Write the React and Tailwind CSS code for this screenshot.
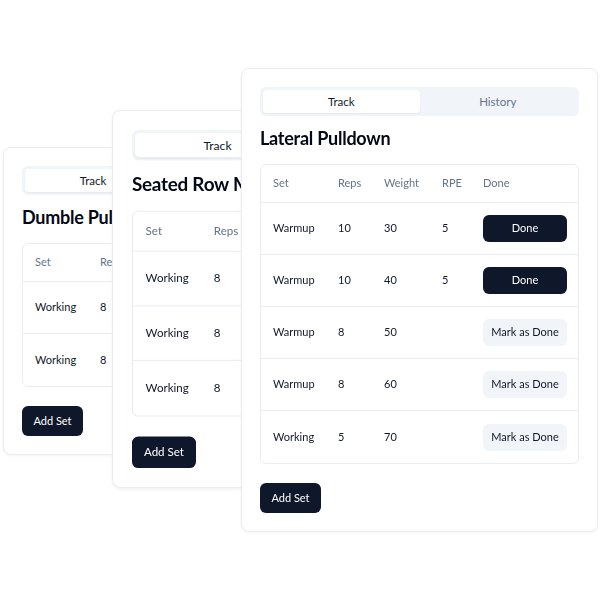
import React from "react";

const font = { fontFamily: 'Lato, "Noto Sans", sans-serif' };

function Card({ title, rows, className }) {
  return (
    <div
      className={`absolute rounded-lg border border-[#e9edf2] bg-white p-[18px] shadow-[0_1px_3px_rgba(15,23,42,0.05)] ${className}`}
    >
      <div className="flex h-[29px] rounded-md bg-[#f1f5f9] p-[3px] text-[11.5px]">
        <div className="flex flex-1 items-center justify-center rounded-[4px] bg-white text-[#0f172a] shadow-[0_1px_2px_rgba(0,0,0,0.05)]">
          Track
        </div>
        <div className="flex flex-1 items-center justify-center text-[#64748b]">History</div>
      </div>
      <div className="mt-[8px] mb-[12px] h-[28px] overflow-hidden whitespace-nowrap text-[18px] leading-[28px] font-bold tracking-[-0.25px] text-[#020817]">
        {title}
      </div>
      <div className="rounded-md border border-[#e9edf2] text-[11px]">
        <div className="flex h-[38px] items-center border-b border-[#e9edf2] px-3 text-[#64748b]">
          <div className="w-[65px] shrink-0">Set</div>
          <div className="w-[46px] shrink-0">Reps</div>
          <div className="w-[58px] shrink-0">Weight</div>
          <div className="w-[41px] shrink-0">RPE</div>
          <div className="flex-1">Done</div>
        </div>
        {rows.map((r, i) => (
          <div
            key={i}
            className={`flex h-[52px] items-center px-3 text-[#0f172a] ${i < rows.length - 1 ? "border-b border-[#e9edf2]" : ""}`}
          >
            <div className="w-[65px] shrink-0">{r[0]}</div>
            <div className="w-[46px] shrink-0">{r[1]}</div>
            <div className="w-[58px] shrink-0">{r[2]}</div>
            <div className="w-[41px] shrink-0">{r[3]}</div>
            <div className="flex flex-1 justify-end">
              {r[4] ? (
                <button className="h-[27px] w-[84px] rounded-md bg-[#0f172a] text-white">Done</button>
              ) : (
                <button className="h-[27px] w-[84px] rounded-md bg-[#f1f5f9] text-[#0f172a]">Mark as Done</button>
              )}
            </div>
          </div>
        ))}
      </div>
      <button className="mt-[19px] h-[30px] w-[61px] rounded-md bg-[#0f172a] text-[11px] text-white">
        Add Set
      </button>
    </div>
  );
}

export default function App() {
  return (
    <div className="relative h-[600px] w-[600px] overflow-hidden bg-white" style={font}>
      <Card
        title="Dumble Pullover"
        className="left-[3px] top-[147px] w-[316px]"
        rows={[
          ["Working", "8", "20", "", false],
          ["Working", "8", "20", "", false],
        ]}
      />
      <Card
        title="Seated Row Machine"
        className="left-[112px] top-[110px] w-[358px] origin-top-left scale-[1.05]"
        rows={[
          ["Working", "8", "40", "", false],
          ["Working", "8", "40", "", false],
          ["Working", "8", "40", "", false],
        ]}
      />
      <Card
        title="Lateral Pulldown"
        className="left-[241px] top-[68px] w-[357px]"
        rows={[
          ["Warmup", "10", "30", "5", true],
          ["Warmup", "10", "40", "5", true],
          ["Warmup", "8", "50", "", false],
          ["Warmup", "8", "60", "", false],
          ["Working", "5", "70", "", false],
        ]}
      />
    </div>
  );
}
